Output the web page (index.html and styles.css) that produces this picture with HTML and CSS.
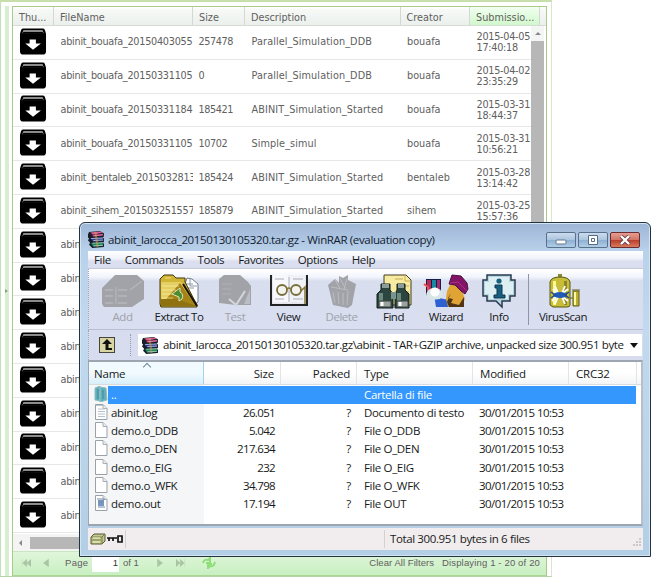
FILE: index.html
```
<!DOCTYPE html>
<html lang="en">
<head>
<meta charset="utf-8">
<title>Simulation outputs</title>
<link rel="stylesheet" href="styles.css">
</head>
<body>
<svg class="defs" aria-hidden="true">
  <symbol id="box" viewBox="0 0 28 28"><path d="M3.500 0.500h21q1.500 0 2 2l1 3.500v18q0 3.500-3.500 3.500h-20q-3.500 0-3.500-3.500v-18l1-3.500q.5-2 2-2z"/><path d="M4 2.300h20l1 3.200h-22z" fill="#bbb"/><path d="M4 4h20l.7 2h-21.400z" fill="#000"/><path d="M10.500 12h6.500v4h5.200l-8.200 6.600-8-6.600h4.500z" fill="#fff"/></symbol>
  <symbol id="books" viewBox="0 0 16 16"><path d="M1 1l10-1 4 2v3l-1 1 1 1v3l-1 1 1 1v3l-11 1-3-3 1-2-2-2 1-2-2-2z" fill="#17202a"/><path d="M2 1.500l9-1 3 1-9 2z" fill="#df5c92"/><path d="M3 3.500l11-1v2l-9 1z" fill="#a40e56"/><path d="M2 6.500l2 1 10-1v3l-9 .5z" fill="#313998"/><path d="M3 7l11-.5" stroke="#a7b7e1"/><path d="M2 11l2 1 10-1v3l-9 .7z" fill="#12835b"/><path d="M4 11.500l10-.5" stroke="#9ed8ae"/><path d="M5 4.500l9-1M5 9l9-.5M5 14l9-.6" stroke="#eee" stroke-width=".6"/><path d="M6 1l2 0 2 14h-2z" fill="#c5a052" opacity=".55"/></symbol>
  <symbol id="page" viewBox="0 0 14 16"><path d="M1.500.5h7.500l4 4v11h-11.500z" fill="#fff" stroke="#9aa1a7"/><path d="M9 .5v4h4" fill="#e7ebee" stroke="#a9b0b5"/></symbol>
</svg>

<main class="portal">
  <div class="splitter"><i></i></div>
  <section class="grid">
    <div class="row head"><span>Thu...</span><span>FileName</span><span>Size</span><span>Description</span><span>Creator</span><span class="sorted">Submissio...</span><span class="tail"></span></div>
    <div class="gridbody">
      <div class="rows">
        <div class="row"><svg><use href="#box"/></svg><span>abinit_bouafa_20150403055</span><span>257478</span><span>Parallel_Simulation_DDB</span><span>bouafa</span><span>2015-04-05<br>17:40:18</span></div>
        <div class="row"><svg><use href="#box"/></svg><span>abinit_bouafa_20150331105</span><span>0</span><span>Parallel_Simulation_DDB</span><span>bouafa</span><span>2015-04-02<br>23:35:29</span></div>
        <div class="row"><svg><use href="#box"/></svg><span>abinit_bouafa_20150331184</span><span>185421</span><span>ABINIT_Simulation_Started</span><span>bouafa</span><span>2015-03-31<br>18:44:37</span></div>
        <div class="row"><svg><use href="#box"/></svg><span>abinit_bouafa_20150331105</span><span>10702</span><span>Simple_simul</span><span>bouafa</span><span>2015-03-31<br>10:56:21</span></div>
        <div class="row"><svg><use href="#box"/></svg><span>abinit_bentaleb_2015032813</span><span>185424</span><span>ABINIT_Simulation_Started</span><span>bentaleb</span><span>2015-03-28<br>13:14:42</span></div>
        <div class="row"><svg><use href="#box"/></svg><span>abinit_sihem_201503251557</span><span>185879</span><span>ABINIT_Simulation_Started</span><span>sihem</span><span>2015-03-25<br>15:57:36</span></div>
        <div class="row"><svg><use href="#box"/></svg><span>abin</span></div>
        <div class="row"><svg><use href="#box"/></svg><span>abin</span></div>
        <div class="row"><svg><use href="#box"/></svg><span>abin</span></div>
        <div class="row"><svg><use href="#box"/></svg><span>abin</span></div>
        <div class="row"><svg><use href="#box"/></svg><span>abin</span></div>
        <div class="row"><svg><use href="#box"/></svg><span>abin</span></div>
        <div class="row"><svg><use href="#box"/></svg><span>abin</span></div>
        <div class="row"><svg><use href="#box"/></svg><span>abin</span></div>
        <div class="row"><svg><use href="#box"/></svg><span>abin</span></div>
      </div>
      <div class="vscroll"><i></i><b></b></div>
    </div>
    <div class="hscroll"><i></i><b></b></div>
    <footer class="pager">
      <svg class="nav" width="10" height="8" viewBox="0 0 12 9"><path d="M1.500 0v9M7 0L2 4.500 7 9zM12 0L7 4.500 12 9z"/></svg>
      <svg class="nav prev" width="6" height="8" viewBox="0 0 6 9"><path d="M6 0L0 4.500 6 9z"/></svg>
      <span class="pg">Page</span><span class="num">1</span><span class="of">of 1</span>
      <svg class="nav next" width="6" height="8" viewBox="0 0 6 9"><path d="M0 0l6 4.500L0 9z"/></svg>
      <svg class="nav last" width="10" height="8" viewBox="0 0 12 9"><path d="M10.500 0v9M0 0l5 4.500L0 9zM5 0l5 4.500L5 9z"/></svg>
      <svg class="refresh" width="14" height="12"><path d="M1 6q1-4 5-3l2-2v5H4M13 5q-1 5-5 4l-2 2V7h4" fill="none" stroke="#8ce077" stroke-width="2"/></svg>
      <span class="clear">Clear All Filters</span><span class="count">Displaying 1 - 20 of 20</span>
    </footer>
  </section>
</main>

<section class="window">
  <header class="title"><svg width="17" height="17"><use href="#books"/></svg><h1>abinit_larocca_20150130105320.tar.gz - WinRAR (evaluation copy)</h1>
    <div class="controls">
      <button aria-label="Minimize"><svg width="12" height="10"><rect x="1" y="5" width="10" height="4" rx="1" fill="#fff" stroke="#65768d"/></svg></button>
      <button aria-label="Maximize"><svg width="12" height="10"><path d="M1.500.5h9v9h-9zM4.500 3.500h3v3h-3z" fill="#fff" stroke="#586b84"/></svg></button>
      <button class="close" aria-label="Close"><svg width="12" height="10"><path d="M2 1l8 8M10 1L2 9" stroke="#643e47" stroke-width="4"/><path d="M2 1l8 8M10 1L2 9" stroke="#fff" stroke-width="2.400"/></svg></button>
    </div>
  </header>
  <nav class="menu"><span>File</span><span>Commands</span><span>Tools</span><span>Favorites</span><span>Options</span><span>Help</span></nav>
  <div class="tools">
    <div class="tool off"><svg width="44" height="34"><path d="M1 14L14 1h22l7 6v18l-12 8H3l-2-3z" fill="#a2a3a8"/><path d="M4 16h8M17 16h9M4 22h8M17 22h9M4 29h8M17 29h9M29 16l12-9" stroke="#bfc0c8" fill="none"/><path d="M15 13v17" stroke="#b7b8bf"/></svg><span>Add</span></div>
    <div class="tool"><svg width="40" height="34"><path d="M28 4l5 1 6 5v18l-5 3H19z" fill="#fff" stroke="#737b88"/><path d="M31 5v7h7M23 10h11M24 14h11" fill="none" stroke="#8d9aab"/><path d="M1 8V5l4-4h9l3 3h9v4l12 23v2H2L1 30z" fill="#d3b536" stroke="#433808"/><path d="M2 8h20l13 23H2z" fill="#e5cf64"/><path d="M2 31L21 9 37 32z" fill="#a58317"/><path d="M2 25h16L37 32H2z" fill="#8f720f"/><path d="M3 12h17M3 16h14M3 20h12M3 24h11M6 4h6" stroke="#fff4a5" opacity=".65"/><path d="M24 10l14 22" stroke="#171105" stroke-width="2"/><path d="M13 20l8-6v4q4 2 2 7l-3 2v-4z" fill="#4a8d2e" stroke="#dfe4b8"/></svg><span>Extract To</span></div>
    <div class="tool off"><svg width="34" height="34"><path d="M1 5l5-4h16l8 7 3 4v19H18L1 29z" fill="#a2a3a8"/><path d="M4 10h10M4 15h9M4 20h9" stroke="#aeb0b5"/><path d="M11 25l7 6 9-14" fill="none" stroke="#d4d6df" stroke-width="2"/><path d="M32 15v15h-6z" fill="#bbbdc5"/></svg><span>Test</span></div>
    <div class="tool"><svg width="40" height="34"><path d="M2 1v30h36V1" fill="#e6e6ec" stroke="#242424" stroke-width="2"/><path d="M4 1h14q2 0 2 3v25q-3-2-7-1-5 1-9 0z" fill="#f7f7fc"/><path d="M36 1H22q-2 0-2 3v25q5-2 7-1 5 1 9 0z" fill="#f1f1f8"/><path d="M20 3v25M6 5h9M24 5h10M6 25h9M24 25h10" stroke="#aaaeb9"/><circle cx="13" cy="16" r="5" fill="#f3f3eb" stroke="#776d3c" stroke-width="1.800"/><circle cx="27" cy="16" r="5" fill="#f3f3eb" stroke="#776d3c" stroke-width="1.800"/><path d="M18 15q2-2 4 0M32 17l4-4v17" fill="none" stroke="#827636" stroke-width="1.500"/></svg><span>View</span></div>
    <div class="tool off"><svg width="30" height="34"><path d="M1 11l7-6 4 4V2l4 2 5-3v5l8 4-4 21-4 3-15-3z" fill="#a2a3a8"/><path d="M4 13l17 3M8 6l5 8M13 4l5 10M20 4l-3 12M6 18l2 11M11 18l1 12M16 19v12M21 17l-1 14" stroke="#bbbdc3"/></svg><span>Delete</span></div>
    <div class="tool"><svg width="38" height="36"><path d="M9 1h22l5 5v25H9z" fill="#f6eba0" stroke="#443d20"/><path d="M30 1v6h6M20 5h8M25 12h9M25 18h9" fill="none" stroke="#c5ad55"/><path d="M6 10h9v6l3 4v14H2V20l4-4zM22 10h8v6l4 4v14H20V20l2-4z" fill="#2c463f" stroke="#101f1a"/><path d="M7 10h7v4H7zM23 10h6v4h-6z" fill="#8b9c99"/><path d="M16 18h5v7h-5z" fill="#799391"/><path d="M4 19h4v8H4zM22 19h4v8h-4z" fill="#6a8a7d"/><path d="M4 27h12v6H4zM22 27h11v6H22z" fill="#9ba3a0" stroke="#3b4541"/><path d="M7 28v4M25 28v4" stroke="#fff" stroke-width="3"/></svg><span>Find</span></div>
    <div class="tool"><svg width="46" height="34"><path d="M3 5h15v17H3z" fill="#151e47"/><path d="M4 6h4v11H4z" fill="#ba2a55"/><path d="M9 6h4v11H9z" fill="#158ba1"/><path d="M14 6h3v11h-3z" fill="#a62b71"/><path d="M1 10l4 3v8" stroke="#e84d58" stroke-width="2" fill="none"/><path d="M11 21l5 3 10 2 5 7H13z" fill="#2d60d2"/><path d="M24 17l4-8 8-1 6 17-4 8H25l-2-8z" fill="#dfa433"/><path d="M28 19l-3 5 5 1-2 4 8 2 5-8v10H26l-2-5" fill="#4e3515"/><path d="M26 10l3-9 9 1 6 7 1 6-3 5-4-3-6-6z" fill="#811467" stroke="#4d103f"/><path d="M27 9l8-1 9 9" fill="none" stroke="#b12b80"/><path d="M3 22q1-8 8-8t9 6l-3 5-8 1z" fill="#d8e6e8"/><circle cx="12" cy="18" r="4.500" fill="#fff"/></svg><span>Wizard</span></div>
    <div class="tool"><svg width="34" height="34"><path d="M5 1h24v5h4v16h-5v5h-8v6l-6-6H5v-5H1V6h4z" fill="#b6d6df" stroke="#293a4f" stroke-width="1.500"/><path d="M7 3h20v5h4v12h-5v5H7v-5H3V8h4z" fill="#deeff3"/><circle cx="17" cy="7" r="2.600" fill="#17617f"/><path d="M13 11h7v10h3v3H12v-3h3v-7h-2z" fill="#17617f" stroke="#0e3655"/></svg><span>Info</span></div>
    <i class="rule"></i>
    <div class="tool"><svg width="36" height="34"><path d="M13 0h4v3h-4z" fill="#8d8a37"/><path d="M5 8q1-5 10-5t10 5v23q0 2-3 2H8l-3-2z" fill="#c8bd38" stroke="#595916"/><path d="M8 7h3v24H8z" fill="#fff78f"/><path d="M19 7h3v24h-3z" fill="#8c8529"/><path d="M28 17h6v15h-6z" fill="#bcae2d" stroke="#5e5e18"/><path d="M29 18h2v13h-2z" fill="#fffa9d"/><path d="M25 24h3M27 16h8" stroke="#65611f"/><path d="M10 12l3 7M8 15l4 5M10 30l3-7M7 27l5-5M20 12l-3 7M23 15l-5 4M20 30l-3-7M23 27l-5-4" stroke="#fff" stroke-width="1.800"/><ellipse cx="15" cy="21" rx="7" ry="3" fill="#225bb7"/><path d="M6 18l4 3-4 3M24 18l-4 3 4 3" fill="none" stroke="#1c4d96" stroke-width="1.500"/></svg><span>VirusScan</span></div>
  </div>
  <div class="address"><div class="up"><svg width="16" height="16"><rect x=".5" y=".5" width="15" height="15" fill="#d9d5a2" stroke="#44443a"/><path d="M8 2l5 5H9.500v4H13v2H6.500V7H3z" fill="#111"/></svg></div>
    <div class="path"><svg width="17" height="17"><use href="#books"/></svg><span>abinit_larocca_20150130105320.tar.gz\abinit - TAR+GZIP archive, unpacked size 300.951 byte</span><i></i></div>
  </div>
  <div class="list">
    <div class="line lhead"><span>Name</span><span>Size</span><span>Packed</span><span>Type</span><span>Modified</span><span>CRC32</span></div>
    <div class="line selected"><span><svg width="14" height="16"><path d="M1 2l5-2v15l-5-1zM6 1l6 1 1 12-7 2z" fill="#60aeba" stroke="#8dbec4"/><path d="M4 3v10M9 4v9" stroke="#3f8c9b"/></svg><em>..</em></span><span></span><span></span><span>Cartella di file</span><span></span><span></span></div>
    <div class="line"><span><svg width="14" height="16"><use href="#page"/><path d="M4 5h7M4 7.500h7M4 10h7M4 12.500h7M2 1.500h9" stroke="#b3c3cd"/></svg><em>abinit.log</em></span><span>26.051</span><span>?</span><span>Documento di testo</span><span>30/01/2015 10:53</span><span></span></div>
    <div class="line"><span><svg width="14" height="16"><use href="#page"/></svg><em>demo.o_DDB</em></span><span>5.042</span><span>?</span><span>File O_DDB</span><span>30/01/2015 10:53</span><span></span></div>
    <div class="line"><span><svg width="14" height="16"><use href="#page"/></svg><em>demo.o_DEN</em></span><span>217.634</span><span>?</span><span>File O_DEN</span><span>30/01/2015 10:53</span><span></span></div>
    <div class="line"><span><svg width="14" height="16"><use href="#page"/></svg><em>demo.o_EIG</em></span><span>232</span><span>?</span><span>File O_EIG</span><span>30/01/2015 10:53</span><span></span></div>
    <div class="line"><span><svg width="14" height="16"><use href="#page"/></svg><em>demo.o_WFK</em></span><span>34.798</span><span>?</span><span>File O_WFK</span><span>30/01/2015 10:53</span><span></span></div>
    <div class="line"><span><svg width="14" height="16"><use href="#page"/><path d="M4 5h6v6H4z" fill="#7898bd"/><path d="M3 4h8M4 12h7M5 7h4" stroke="#6f8bab"/></svg><em>demo.out</em></span><span>17.194</span><span>?</span><span>File OUT</span><span>30/01/2015 10:53</span><span></span></div>
  </div>
  <footer class="status">
    <div class="marks"><svg width="16" height="12"><path d="M1 4l3-3h11v7l-3 3H1z" fill="#c5c990" stroke="#535832"/><path d="M1 4h11l3-3M12 4v7M2 7h9" fill="none" stroke="#777d49"/><path d="M3 5h7M3 9h7" stroke="#f0f1ca"/></svg><svg width="16" height="10"><path d="M0 4h10M2 4v3M6 4v3M15 2h-4v6h4z" fill="none" stroke="#111" stroke-width="1.700"/></svg></div>
    <div class="total">Total 300.951 bytes in 6 files</div>
    <svg class="grip" width="10" height="10"><path d="M7 1h2M7 4h2M7 7h2M4 4h2M4 7h2M1 7h2" stroke="#cdc8c8" stroke-width="2"/></svg>
  </footer>
</section>
</body>
</html>
```
FILE: styles.css
```
* { box-sizing: border-box; }
body { margin: 0; width: 654px; height: 579px; overflow: hidden; position: relative; background: #fff; font: 11.5px/18px "Open Sans", "Noto Sans", sans-serif; letter-spacing: -.33px; color: #171a20; }
svg { display: block; flex: none; }
.defs { position: absolute; width: 0; height: 0; }
i, em { font-style: normal; }

/* Results grid behind the archive window */
.portal { width: 552px; height: 577px; display: flex; border-top: 2px solid #c8dfac; border-right: 1px solid #d8e6cc; border-left: 1px solid #c2dfb5; border-bottom: 1px solid #b6d3a8; }
.splitter { width: 4px; margin: 4px 3px 0 4px; background: #d6efce; display: flex; align-items: center; }
.splitter i { border: 2px solid transparent; border-left: 3px solid #8da285; }
.grid { width: 535px; height: 570px; margin-top: 4px; border: 1px solid #aac98b; border-bottom: 0; display: flex; flex-direction: column; font: 9.7px/11px "DejaVu Sans", sans-serif; letter-spacing: 0; color: #606060; }
.row { display: grid; grid-template-columns: 41px 139px 52px 155.5px 69.5px 70px 1fr; }
.head { height: 19px; flex: none; background: linear-gradient(#fff 1px, #f7f9f7 2px, #ebf0ed); border-bottom: 1px solid #d6dcd5; line-height: 22px; }
.head span { padding-left: 6px; border-right: 1px solid #d3d8d2; white-space: nowrap; overflow: hidden; }
.head .sorted { background: linear-gradient(#f2fff0, #d1f8cc); }
.head .tail { border: 0; }
.gridbody { height: 508px; display: flex; overflow: hidden; }
.rows { flex: 1; }
.rows .row { height: 33.8px; border-bottom: 1px solid #e5e9e5; align-items: center; grid-template-columns: 41px 139px 52px 155.5px 69.5px 1fr; }
.rows .row svg { width: 28px; height: 27px; margin: 0 0 2px 6px; }
.rows .row span { padding-left: 6.500px; white-space: nowrap; line-height: 14px; }
.rows .row span:nth-child(2) { letter-spacing: -.26px; overflow: hidden; }
.rows .row span:nth-child(3) { padding-left: 5.500px; letter-spacing: -.4px; }
.rows .row span:nth-child(4) { letter-spacing: .1px; }
.rows .row span:nth-child(6) { line-height: 11px; letter-spacing: -.27px; }
.vscroll { width: 13px; margin-right: 2px; background: #f4f6f4; display: flex; flex-direction: column; align-items: center; }
.vscroll i { border: 3px solid transparent; border-bottom-color: #888; margin: 3px 0 6px; }
.vscroll b { width: 13px; flex: 1; background: #b7b7b7; }
.hscroll { height: 17px; display: flex; align-items: center; background: #f4f4f4; }
.hscroll i { border: 3px solid transparent; border-right-color: #888; margin: 0 8px 0 3px; }
.hscroll b { height: 12px; width: 490px; background: #b7b7b7; }
.pager { flex: 1; display: flex; align-items: center; padding: 0 6px 1px 8px; border-top: 1px solid #c9e8bf; border-bottom: 1px solid #a9d893; background: linear-gradient(#dff6da, #c9efc2); font: 9.5px/14px "Liberation Sans", sans-serif; }
.nav { fill: #a9c5a4; stroke: #a9c5a4; stroke-width: .4; }
.prev { margin-left: 12px; }
.pg { margin-left: 16px; width: 27px; letter-spacing: .3px; }
.num { width: 27px; background: #fff; text-align: right; padding-right: 1px; color: #333; line-height: 18px; }
.of { margin-left: 4px; }
.next { margin-left: 18px; }
.last { margin-left: 13px; }
.refresh { margin-left: 16px; }
.clear { margin-left: auto; letter-spacing: .05px; }
.count { margin-left: 8px; letter-spacing: .15px; }

/* Archive window */
.window { position: absolute; left: 79px; top: 222px; width: 572px; height: 335px; padding: 0 7px 6px 8px; border: 1px solid #26333f; border-radius: 6px 6px 0 0; background: linear-gradient(#9eb6d6, #b9d1ea 28px, #c2d9ee 110px, #b3cfe5); box-shadow: inset 0 0 0 1px #d2e5f4; display: flex; flex-direction: column; }
.title { height: 28px; flex: none; display: flex; align-items: center; padding-top: 5px; }
.title h1 { margin: 0 0 0 3px; font: 11.5px/18px "Open Sans", sans-serif; white-space: nowrap; letter-spacing: -.36px; color: #111c30; }
.controls { margin: 0 3px 0 auto; display: flex; gap: 2px; }
.controls button { width: 30px; height: 16px; padding: 0; display: flex; align-items: center; justify-content: center; border: 1px solid #59708d; border-radius: 2px; background: linear-gradient(#ccdced, #abc4df 50%, #8eafd2 51%, #b0cde6); }
.controls .close { background: linear-gradient(#e59e91, #d27362 50%, #b83d2a 51%, #d87b5f); border-color: #6a2c31; }
.menu { height: 18px; flex: none; display: flex; align-items: center; gap: 14px; padding-left: 6px; background: linear-gradient(#fff, #f0f2fa 45%, #dbdfef 60%, #d9dded); border-bottom: 1px solid #c4c9dc; letter-spacing: -.35px; }
.tools { height: 61px; flex: none; display: grid; grid-template-columns: 55px 58px 54px 53px 53px 51px 54px 52px 6px 64px; padding: 5px 0 0 6px; background: linear-gradient(#fff 1px, #f1f4fc 8px, #d9deef 12px, #d9def0); border-bottom: 1px solid #b9bed1; border-left: 1px dotted #a2a7b8; }
.tool { display: flex; flex-direction: column; align-items: center; }
.tool svg { height: 34px; overflow: visible; }
.tool span { line-height: 18px; letter-spacing: -.45px; white-space: nowrap; }
.off { color: #a0a2aa; }
.rule { width: 1px; height: 51px; margin-left: 3px; background: #8f94a8; }
.address { height: 30px; flex: none; display: flex; padding: 4px 1px 4px 0; background: #d7dcee; border-left: 1px dotted #a2a7b8; }
.up { width: 42px; margin-right: 7px; padding: 3px 0 0 10px; border-right: 1px dotted #9499ac; }
.path { flex: 1; min-width: 0; display: flex; align-items: center; padding: 0 4px; background: #fff; }
.path span { width: 463px; margin: 0 6px 0 4px; overflow: hidden; white-space: nowrap; letter-spacing: -.39px; }
.path i { border: 4px solid transparent; border-top: 5px solid #111; border-bottom: 0; }
.list { height: 166px; flex: none; background: linear-gradient(90deg, #f5f6f8 115px, #fff 115px); border: 2px solid #9da5b0; border-left-width: 1px; border-right-color: #b9bfc8; }
.line { height: 18.15px; display: grid; align-items: center; grid-template-columns: 115px 77px 76px 116px 96px 68px; line-height: 18px; white-space: nowrap; }
.line > span { padding-left: 7px; }
.line > span:first-child { display: flex; padding-left: 5px; }
.line em { flex: 1; margin-left: 1px; padding-left: 2px; }
.line > span:nth-child(2), .line > span:nth-child(3) { text-align: right; padding: 0 6px 0 0; }
.line:not(.lhead) > span:nth-child(2) { letter-spacing: -.65px; }
.line:not(.lhead) > span:nth-child(5) { letter-spacing: -.55px; padding-left: 6px; }
.lhead { position: relative; height: 23px; margin-bottom: 1px; background: linear-gradient(#fff 50%, #f3f4f6); border-bottom: 1px solid #d8dce1; letter-spacing: -.2px; }
.lhead > span { height: 22px; line-height: 23px; border-right: 1px solid #e1e4e9; }
.lhead > span:first-child { background: linear-gradient(#f1faff 50%, #d9eff9); border-color: #9fd5ec; }
.lhead::before { content: ""; position: absolute; left: 55px; top: 2px; width: 5px; height: 5px; border: solid #6d8997; border-width: 1px 0 0 1px; transform: rotate(45deg); }
.selected { width: 547px; color: #fff; background: linear-gradient(90deg, #f5f6f8 19px, #3397fd 19px); }
.status { height: 22px; flex: none; margin-top: 2px; display: flex; align-items: center; background: #f1edee; }
.marks { width: 38px; height: 18px; display: flex; align-items: center; gap: 1px; padding-left: 2px; border-right: 1px solid #d6d0d0; }
.total { margin-left: 258px; padding-left: 5px; border-left: 1px solid #d6d0d0; white-space: nowrap; letter-spacing: -.38px; }
.grip { margin: 8px 1px 0 auto; }
```
